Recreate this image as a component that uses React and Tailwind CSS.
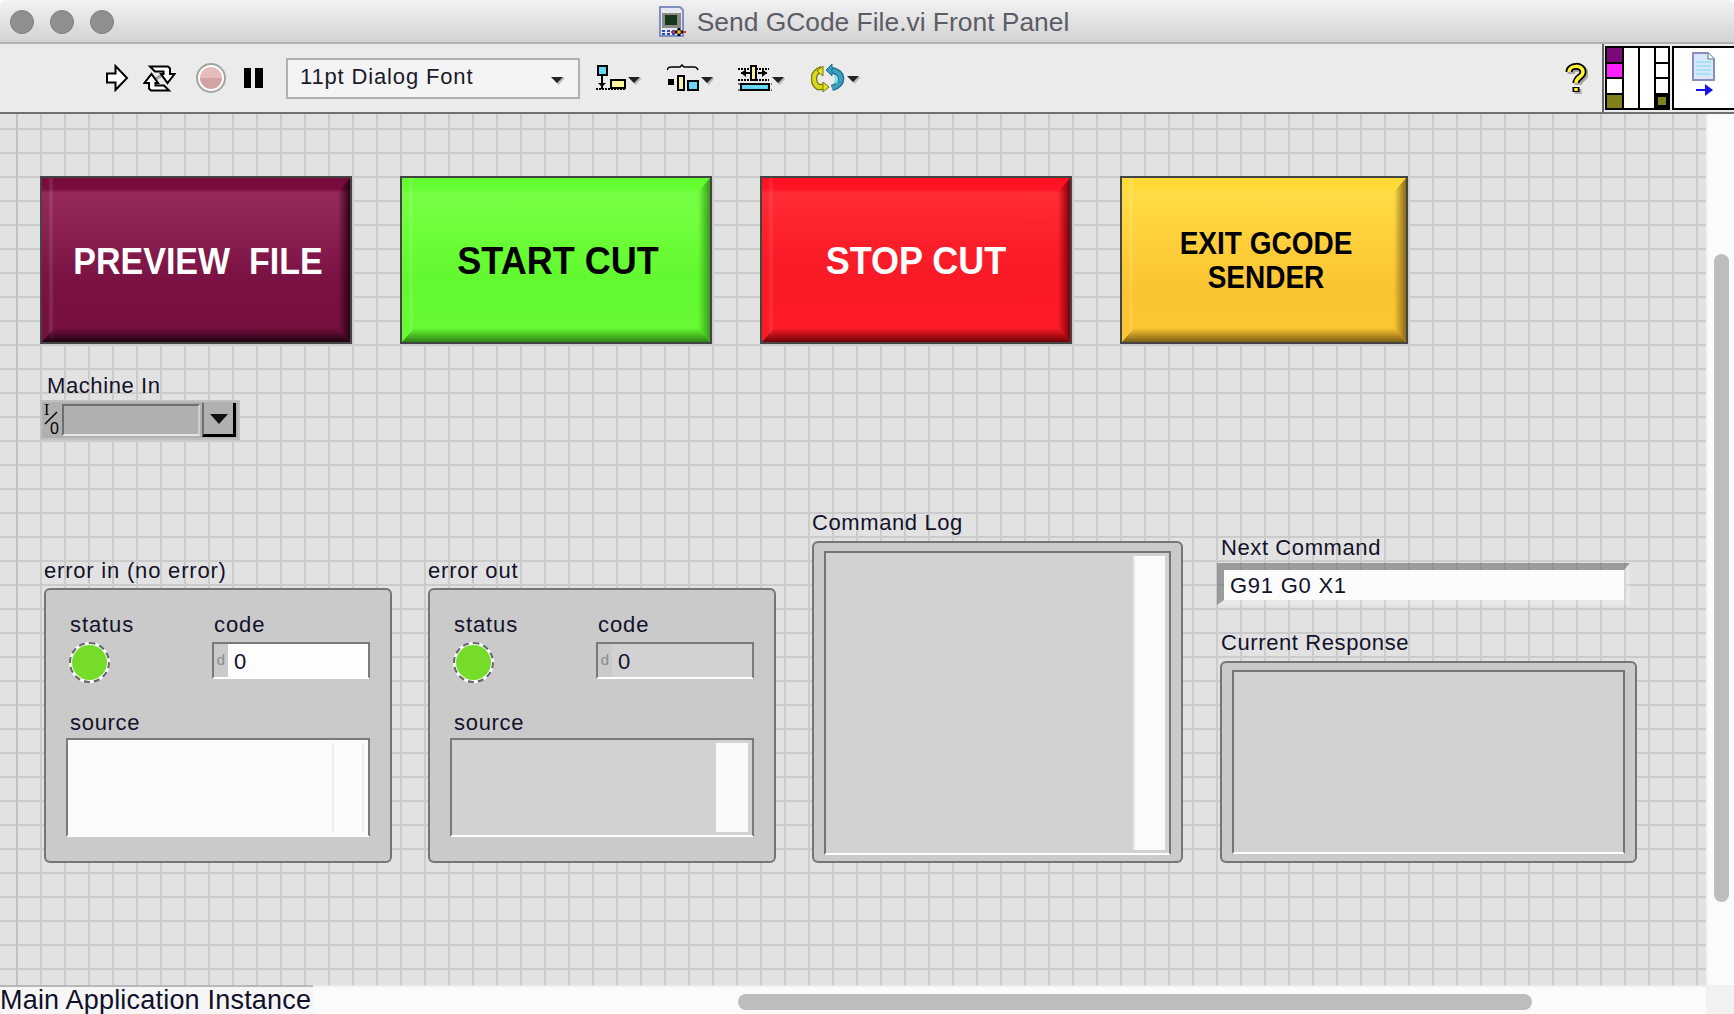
import React from 'react'

const buttons = [
  {
    label: 'PREVIEW  FILE',
    width: 'w-[312px]',
    text: 'text-white text-[34px] pl-1',
    bg: 'bg-[linear-gradient(to_right,transparent_6px,rgba(255,255,255,0.12)_9px,transparent_12px),linear-gradient(to_bottom,#760a3b,#7a0d40_11px,#95295c_15px,#8b2152_50px,#7a1243_100px,#75103f_100%)]',
    bottom: 'bg-[linear-gradient(to_top,#1e0210,transparent)]',
    right: 'bg-[linear-gradient(to_left,#2a0316,transparent)]',
  },
  {
    label: 'START CUT',
    width: 'w-[312px]',
    text: 'text-black text-[36px] pl-1',
    bg: 'bg-[linear-gradient(to_right,transparent_6px,rgba(255,255,255,0.12)_9px,transparent_12px),linear-gradient(to_bottom,#63fb30,#66ff33_11px,#76ff44_15px,#6eff3a_50px,#62f82f_100px,#66fb32_100%)]',
    bottom: 'bg-[linear-gradient(to_top,#2f8416,transparent)]',
    right: 'bg-[linear-gradient(to_left,#3a9a1c,transparent)]',
  },
  {
    label: 'STOP CUT',
    width: 'w-[312px]',
    text: 'text-white text-[36px]',
    bg: 'bg-[linear-gradient(to_right,transparent_6px,rgba(255,255,255,0.1)_9px,transparent_12px),linear-gradient(to_bottom,#ff1020,#ff1425_11px,#ff2c35_15px,#ff232e_45px,#f81a26_90px,#ff1b27_100%)]',
    bottom: 'bg-[linear-gradient(to_top,#6e0006,transparent)]',
    right: 'bg-[linear-gradient(to_left,#7a0008,transparent)]',
  },
  {
    label: 'EXIT GCODE SENDER',
    width: 'w-[288px]',
    text: 'text-black text-[28px] leading-[31px] px-[40px] pl-[44px]',
    bg: 'bg-[linear-gradient(to_right,transparent_6px,rgba(255,255,255,0.15)_9px,transparent_12px),linear-gradient(to_bottom,#ffd935,#ffdb3a_11px,#ffdc45_15px,#ffd33e_50px,#fac431_110px,#fdc732_100%)]',
    bottom: 'bg-[linear-gradient(to_top,#7d5f16,transparent)]',
    right: 'bg-[linear-gradient(to_left,#8a6a1a,transparent)]',
  },
]

function Tri({ x, y }) {
  return (
    <g>
      <path d={`M${x + 1} ${y + 1}h13l-6.5 7z`} fill="#b8b8b8" />
      <path d={`M${x} ${y}h12l-6 6z`} fill="#222" />
    </g>
  )
}

function Toolbar() {
  return (
    <div className="flex h-[70px] shrink-0 items-stretch border-b-2 border-[#707070] bg-[#ebebeb]">
      <div className="flex items-center pl-[105px]">
        <svg width="24" height="28" viewBox="0 0 24 28">
          <path d="M2 9.5H10.5V2L22 14 10.5 26V18.5H2Z" fill="#fff" stroke="#000" strokeWidth="2" />
        </svg>
        <svg width="33" height="27" viewBox="0 0 33 27" className="ml-[14px]">
          <path d="M9 16L23 8" stroke="#9a9a9a" strokeWidth="3" />
          <path d="M7 1.5H25L27 3.5V9H31.5L24.5 18 18 9H20.5V6.5H12Z" fill="#fff" stroke="#000" strokeWidth="2" />
          <path d="M26 25.5H8L6 23.5V18H1.5L8.5 9 15 18H12.5V20.5H21Z" fill="#fff" stroke="#000" strokeWidth="2" />
        </svg>
        <svg width="30" height="30" viewBox="0 0 30 30" className="ml-[20px]">
          <circle cx="15" cy="15" r="14" fill="#fff" stroke="#a3a3a3" strokeWidth="2" />
          <path d="M4 15a11 11 0 0 1 22 0z" fill="#e6bcbc" />
          <path d="M4 15a11 11 0 0 0 22 0z" fill="#d3a3a3" />
        </svg>
        <div className="ml-[18px] flex gap-[4px]">
          <div className="h-[20px] w-[7px] bg-black" />
          <div className="h-[20px] w-[8px] bg-black" />
        </div>
      </div>
      <div className="ml-[23px] mt-[14px] flex h-[41px] w-[294px] items-center justify-between border-2 border-[#b0b0b0] bg-[#f4f4f4] pl-[12px] pr-[12px]">
        <span className="pb-[4px] text-[22px] tracking-[0.85px] text-[#1a1a2a]">11pt Dialog Font</span>
        <svg width="16" height="10" viewBox="0 0 16 10" className="mt-[4px]">
          <Tri x={1} y={1} />
        </svg>
      </div>
      <div className="ml-[16px] mt-[20px] flex items-start gap-[24px]">
        <svg width="47" height="28" viewBox="0 0 47 28">
          <rect x="2" y="2" width="9" height="9" fill="#66d8f5" stroke="#000" strokeWidth="2" />
          <path d="M6 11V25" stroke="#000" strokeWidth="2" />
          <path d="M2 19l4 4 4-4z" fill="#000" />
          <path d="M0 25H29" stroke="#000" strokeWidth="2" strokeDasharray="2 1" />
          <rect x="15" y="16" width="14" height="8" fill="#f9f3a0" stroke="#000" strokeWidth="2" />
          <Tri x={32} y={13} />
        </svg>
        <svg width="47" height="28" viewBox="0 0 47 28">
          <path d="M0 6Q1 3 4 3H13L15 1 17 3H27Q30 3 31 6" fill="none" stroke="#000" strokeWidth="1.5" />
          <rect x="1" y="15" width="6" height="6" fill="#000" />
          <rect x="11" y="12" width="6" height="14" fill="#f9f3a0" stroke="#000" strokeWidth="2" />
          <rect x="21" y="17" width="10" height="9" fill="#66d8f5" stroke="#000" strokeWidth="2" />
          <Tri x={34} y={13} />
        </svg>
        <svg width="47" height="28" viewBox="0 0 47 28">
          <path d="M0 5H31M0 16H31" stroke="#000" strokeWidth="2" strokeDasharray="2 1" />
          <rect x="13" y="2" width="5" height="14" fill="#f9f3a0" stroke="#000" strokeWidth="2" />
          <path d="M3 9H12M20 9H29" stroke="#000" strokeWidth="2" />
          <path d="M8 5l-5 4 5 4zM24 5l5 4-5 4z" fill="#000" />
          <rect x="3" y="20" width="28" height="6" fill="#66d8f5" stroke="#000" strokeWidth="2" />
          <path d="M0 20H34M0 26H34" stroke="#000" strokeWidth="1" strokeDasharray="2 1" />
          <Tri x={34} y={13} />
        </svg>
        <svg width="50" height="32" viewBox="0 0 50 32" className="ml-[2px] -mt-[2px]">
          <path d="M11 7Q3 10 3 16Q3 22 7 25H13" fill="none" stroke="#77770f" strokeWidth="6.5" />
          <path d="M11 7Q3 10 3 16Q3 22 7 25H13" fill="none" stroke="#d8d81c" strokeWidth="4" />
          <path d="M12 4V14L6 9ZM12 20L18 25 12 30Z" fill="#e4e41e" stroke="#77770f" strokeWidth="1" />
          <path d="M20 8Q30 10 30 17Q30 23 21 26" fill="none" stroke="#17708c" strokeWidth="6.5" />
          <path d="M20 8Q30 10 30 17Q30 23 21 26" fill="none" stroke="#3d9fbd" strokeWidth="4" />
          <path d="M24 14Q27 17 24 21" fill="none" stroke="#82e0ee" strokeWidth="3" />
          <path d="M21 2V14L15 8Z" fill="#3d9fbd" stroke="#17708c" strokeWidth="1" />
          <Tri x={36} y={14} />
        </svg>
      </div>
      <div className="flex flex-1 items-center justify-end pr-[14px]">
        <svg width="24" height="33" viewBox="0 0 24 33">
          <path d="M5 10C5 3 19 2 19 10C19 15 12 15 12 21M12 25V30" fill="none" stroke="#a6a6a6" strokeWidth="7" transform="translate(2 2)" />
          <path d="M5 10C5 3 19 2 19 10C19 15 12 15 12 21M12 25V30" fill="none" stroke="#000" strokeWidth="7" />
          <path d="M5 10C5 3 19 2 19 10C19 15 12 15 12 21M12 26V29" fill="none" stroke="#fff22e" strokeWidth="3.5" />
        </svg>
      </div>
      <div className="flex w-[132px] shrink-0 border-l-2 border-[#666] bg-[#ebebeb] py-[2px] pl-[1px]">
        <div className="grid h-[64px] w-[65px] shrink-0 grid-cols-[15px_14px_14px_12px] gap-[2px] bg-black p-[2px]">
          <div className="flex flex-col gap-[2px]">
            <div className="flex-1 bg-[#7a0a7a]" />
            <div className="flex-1 bg-[#ff20ff]" />
            <div className="flex-1 bg-white" />
            <div className="flex-1 bg-[#80801a]" />
          </div>
          <div className="bg-white" />
          <div className="bg-white" />
          <div className="flex flex-col gap-[2px]">
            <div className="flex-1 bg-white" />
            <div className="flex-1 bg-white" />
            <div className="flex-1 bg-white" />
            <div className="flex flex-1 items-center justify-center">
              <div className="h-[8px] w-[8px] bg-[#80801a]" />
            </div>
          </div>
        </div>
        <div className="ml-[2px] flex flex-1 items-start justify-center border-2 border-r-0 border-black bg-white pt-[4px]">
          <svg width="24" height="46" viewBox="0 0 24 46">
            <path d="M1 1H16L22 7V28H1Z" fill="#d8e8fb" stroke="#8c8cc0" strokeWidth="2" />
            <path d="M16 1V7H22" fill="#fff" stroke="#7f9f9f" strokeWidth="1.5" />
            <path d="M4 10H19M4 14H19M4 18H19M4 22H19" stroke="#a8e0f5" strokeWidth="2" />
            <path d="M4 38H16" stroke="#1414f0" strokeWidth="2" />
            <path d="M13 32L21 38 13 44Z" fill="#1414f0" />
          </svg>
        </div>
      </div>
    </div>
  )
}

function CodeBox({ live }) {
  return (
    <div className="flex h-[37px] w-[158px] border-x-2 border-t-2 border-b-2 border-[#7a7a7a] border-b-white">
      <span className="flex w-[14px] items-center justify-center bg-[#cacaca] text-[15px] text-[#8a8a8a]">d</span>
      <span className={`flex-1 pl-[6px] text-[22px] leading-[35px] text-[#10102a] ${live ? 'bg-[#fdfdfd]' : 'bg-[#d2d2d2]'}`}>0</span>
    </div>
  )
}

function SourceBox({ live }) {
  return (
    <div className={`flex h-[99px] w-[304px] justify-end border-x-2 border-t-2 border-b-2 border-[#7a7a7a] border-b-white py-[3px] pr-[4px] ${live ? 'bg-[#fbfbfb]' : 'bg-[#d2d2d2]'}`}>
      <div className={`w-[32px] ${live ? 'border-x-2 border-[#eeeeee]' : 'bg-[#fafafa]'}`} />
    </div>
  )
}

function ErrorCluster({ title, titleClass, live }) {
  return (
    <div>
      <div className={`h-[29px] text-[22px] leading-[24px] text-[#12122a] ${titleClass}`}>{title}</div>
      <div className="h-[275px] w-[348px] rounded-[6px] border-2 border-[#757575] bg-[#cacaca] pl-[20px] pt-[23px]">
        <div className="flex h-[98px]">
          <div className="w-[146px]">
            <div className="ml-[4px] h-[29px] text-[22px] leading-[24px] tracking-[0.9px] text-[#12122a]">status</div>
            <div className="ml-[3px] h-[41px] w-[41px] rounded-full border-2 border-dashed border-[#666] bg-white p-[1px]">
              <div className="h-full w-full rounded-full bg-[#76dc2a]" />
            </div>
          </div>
          <div>
            <div className="ml-[2px] h-[29px] text-[22px] leading-[24px] tracking-[0.9px] text-[#12122a]">code</div>
            <CodeBox live={live} />
          </div>
        </div>
        <div className="ml-[4px] h-[27px] text-[22px] leading-[24px] tracking-[0.7px] text-[#12122a]">source</div>
        <SourceBox live={live} />
      </div>
    </div>
  )
}

export default function App() {
  return (
    <div className="flex h-[1014px] w-[1734px] flex-col overflow-hidden font-['Liberation_Sans',sans-serif]">
      <div className="flex h-[44px] shrink-0 items-center justify-center gap-[10px] rounded-t-[6px] border-b-2 border-[#b1b1b1] bg-[linear-gradient(to_bottom,#f2f2f2,#d3d3d3)] pr-[6px]">
        <svg width="28" height="31" viewBox="0 0 28 31">
          <path d="M1 1H21L24 4V30H1Z" fill="#e8e8f0" stroke="#7f8fc0" strokeWidth="2" />
          <rect x="3" y="7" width="19" height="15" fill="#8a8a8a" />
          <rect x="6" y="9" width="12" height="10" fill="#14381c" />
          <path d="M3 25H20M3 28H16" stroke="#2a4ac0" strokeWidth="2" strokeDasharray="3 2" />
          <path d="M12 26H27" stroke="#e02828" strokeWidth="2" />
          <path d="M20 22V30M16 26H24" stroke="#000" strokeWidth="3" />
          <path d="M20 24V28M18 26H22" stroke="#f5d000" strokeWidth="1.5" />
        </svg>
        <span className="pt-[2px] text-[26.4px] leading-none text-[#5c5c66]">Send GCode File.vi Front Panel</span>
      </div>
      <div className="absolute left-[10px] top-[10px] flex gap-[16px]">
        <div className="h-[24px] w-[24px] rounded-full border border-[#7f7f7f] bg-[#8f8f8f]" />
        <div className="h-[24px] w-[24px] rounded-full border border-[#7f7f7f] bg-[#8f8f8f]" />
        <div className="h-[24px] w-[24px] rounded-full border border-[#7f7f7f] bg-[#8f8f8f]" />
      </div>

      <Toolbar />

      <div className="flex min-h-0 flex-1">
        <div className="relative flex-1 bg-[#e2e2e2] bg-[linear-gradient(to_right,#cbcbcb_2px,transparent_2px),linear-gradient(to_bottom,#cbcbcb_2px,transparent_2px)] bg-size-[24px_24px] bg-position-[16px_14px] pl-[40px] pt-[62px]">
          <div className="absolute inset-y-0 left-[16px] w-[2px] bg-[#c2c2c2]" />
          <div className="flex gap-[48px]">
            {buttons.map((b) => (
              <div
                key={b.label}
                className={`relative flex h-[168px] items-center justify-center whitespace-pre-wrap border-2 border-[#444] pt-[2px] text-center font-bold ${b.width} ${b.bg} ${b.text}`}
              >
                <span className="scale-y-[1.1]">{b.label}</span>
                <span className={`absolute inset-x-0 bottom-0 h-[14px] [clip-path:polygon(0_100%,12px_0,calc(100%-12px)_0,100%_100%)] ${b.bottom}`} />
                <span className={`absolute inset-y-0 right-0 w-[12px] [clip-path:polygon(100%_0,0_14px,0_calc(100%-14px),100%_100%)] ${b.right}`} />
              </div>
            ))}
          </div>

          <div className="ml-[7px] mt-[30px] h-[26px] text-[22px] leading-[24px] tracking-[0.6px] text-[#12122a]">Machine In</div>
          <div className="flex h-[40px] w-[200px] items-center border-2 border-[#c0c0c0] bg-[#b0b0b0]">
            <span className="relative h-full w-[20px] shrink-0 text-[16px] leading-none text-black">
              <span className="absolute left-[2px] top-0 font-['Liberation_Serif',serif]">I</span>
              <svg width="16" height="16" viewBox="0 0 16 16" className="absolute left-[1px] top-[8px]"><path d="M2 14L14 2" stroke="#000" strokeWidth="1.5" /></svg>
              <span className="absolute left-[8px] top-[19px]">0</span>
            </span>
            <div className="h-[32px] w-[138px] border-2 border-[#6e6e6e] border-b-[#e6e6e6] border-r-[#cfcfcf] bg-[#b0b0b0]" />
            <div className="ml-[2px] flex h-[34px] w-[34px] items-center justify-center border-b-[3px] border-l-2 border-r-[3px] border-[#000] border-l-[#6e6e6e] bg-[#b0b0b0]">
              <svg width="20" height="12" viewBox="0 0 20 12"><path d="M1 1H19L10 11Z" fill="#111" /></svg>
            </div>
          </div>

          <div className="ml-[4px] mt-[72px] flex h-[351px] items-end gap-[36px]">
            <ErrorCluster title="error in (no error)" titleClass="tracking-[0.8px]" live />
            <ErrorCluster title="error out" titleClass="tracking-[0.8px]" />

            <div>
              <div className="h-[29px] text-[22px] leading-[22px] tracking-[0.6px] text-[#12122a]">Command Log</div>
              <div className="h-[322px] w-[371px] rounded-[6px] border-2 border-[#757575] bg-[#cacaca] px-[10px] pt-[8px]">
                <div className="flex h-[304px] justify-end border-2 border-[#757575] border-b-white bg-[#d2d2d2] py-[3px] pr-[4px]">
                  <div className="w-[32px] border-l-2 border-[#e8e8e8] bg-[#fbfbfb]" />
                </div>
              </div>
            </div>

            <div className="-ml-[2px]">
              <div className="ml-[4px] h-[27px] text-[22px] leading-[24px] tracking-[0.6px] text-[#12122a]">Next Command</div>
              <div className="h-[42px] w-[413px] border-t-[7px] border-b-[5px] border-l-[7px] border-r-[6px] border-t-[rgba(100,100,100,0.55)] border-l-[rgba(100,100,100,0.55)] border-r-[rgba(255,255,255,0.2)] border-b-[rgba(255,255,255,0.2)] bg-[#fcfcfc] bg-clip-padding pl-[6px] text-[22px] leading-[32px] tracking-[0.75px] text-[#12122a]">
                G91 G0 X1
              </div>
              <div className="ml-[4px] mt-[27px] h-[29px] text-[22px] leading-[22px] tracking-[0.6px] text-[#12122a]">Current Response</div>
              <div className="ml-[3px] h-[202px] w-[417px] rounded-[6px] border-2 border-[#757575] bg-[#cacaca] px-[10px] pt-[7px]">
                <div className="h-[184px] border-2 border-[#757575] border-b-white bg-[#d2d2d2]" />
              </div>
            </div>
          </div>
        </div>
        <div className="w-[28px] shrink-0 border-l-2 border-[#f2f2f2] bg-[#fbfbfb] pl-[6px] pt-[140px]">
          <div className="h-[648px] w-[15px] rounded-full bg-[#bdbdbd]" />
        </div>
      </div>

      <div className="flex h-[29px] shrink-0">
        <div className="w-[313px] shrink-0 border-t-2 border-[#b8b8b8] bg-[#f6f6f6] text-[27px] leading-[27px] tracking-[0.2px] text-[#10102a]">Main Application Instance</div>
        <div className="flex-1 border-t-2 border-[#eeeeee] bg-[#fbfbfb] pl-[425px] pt-[7px]">
          <div className="h-[16px] w-[794px] rounded-full bg-[#bdbdbd]" />
        </div>
        <div className="w-[28px] shrink-0 bg-[#f2f2f2]" />
      </div>
    </div>
  )
}
